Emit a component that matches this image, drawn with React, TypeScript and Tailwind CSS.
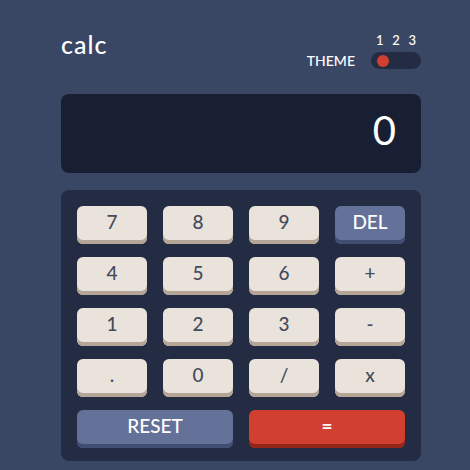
const keys = [
  { label: '7' },
  { label: '8' },
  { label: '9' },
  { label: 'DEL', kind: 'del' },
  { label: '4' },
  { label: '5' },
  { label: '6' },
  { label: '+' },
  { label: '1' },
  { label: '2' },
  { label: '3' },
  { label: '-' },
  { label: '.' },
  { label: '0' },
  { label: '/' },
  { label: 'x' },
];

const Key = ({ label, kind }: { label: string; kind?: string }) => {
  if (kind === 'del') {
    return (
      <button className="flex h-[38px] items-center justify-center rounded-[6px] bg-[#647198] pb-[5px] text-[19px] font-medium text-white shadow-[inset_0_-4px_0_#414e73]">
        {label}
      </button>
    );
  }
  return (
    <button className="flex h-[38px] items-center justify-center rounded-[6px] bg-[#eae3dc] pb-[5px] text-[19px] font-medium text-[#444b5a] shadow-[inset_0_-4px_0_#b4a597]">
      {label}
    </button>
  );
};

export default function App() {
  return (
    <div className="h-[470px] w-[470px] overflow-hidden bg-[#3a4764] pl-[61px] pt-[34px] font-['Lato',sans-serif]">
      <div className="w-[360px]">
        <header className="flex h-[60px] items-start justify-between">
          <h1 className="mt-[-2px] text-[25px] font-medium leading-none tracking-[1px] text-white">calc</h1>
          <div className="flex flex-col items-end">
            <div className="flex w-[50px] justify-between px-[5px] text-[13px] font-medium leading-none text-white">
              <span>1</span>
              <span>2</span>
              <span>3</span>
            </div>
            <div className="mt-[5px] flex items-center gap-[16px]">
              <span className="text-[14px] font-medium leading-none text-white">THEME</span>
              <div className="flex h-[17px] w-[50px] items-center rounded-full bg-[#232c43] px-[6px]">
                <div className="h-[12px] w-[12px] rounded-full bg-[#d03f2f]" />
              </div>
            </div>
          </div>
        </header>

        <div className="flex h-[79px] items-center justify-end rounded-[8px] bg-[#181f33] pb-[7px] pr-[25px] text-[40px] font-normal leading-none text-white">
          0
        </div>

        <div className="mt-[17px] rounded-[8px] bg-[#232c43] px-[16px] pb-[13px] pt-[16px]">
          <div className="grid grid-cols-4 gap-x-[16px] gap-y-[13px]">
            {keys.map((k) => (
              <Key key={k.label} label={k.label} kind={k.kind} />
            ))}
            <button className="col-span-2 flex h-[38px] items-center justify-center rounded-[6px] bg-[#647198] pb-[5px] text-[19px] font-medium text-white shadow-[inset_0_-4px_0_#414e73]">
              RESET
            </button>
            <button className="col-span-2 flex h-[38px] items-center justify-center rounded-[6px] bg-[#d03f2f] pb-[5px] text-[19px] font-bold text-white shadow-[inset_0_-4px_0_#93261a]">
              =
            </button>
          </div>
        </div>
      </div>
    </div>
  );
}
